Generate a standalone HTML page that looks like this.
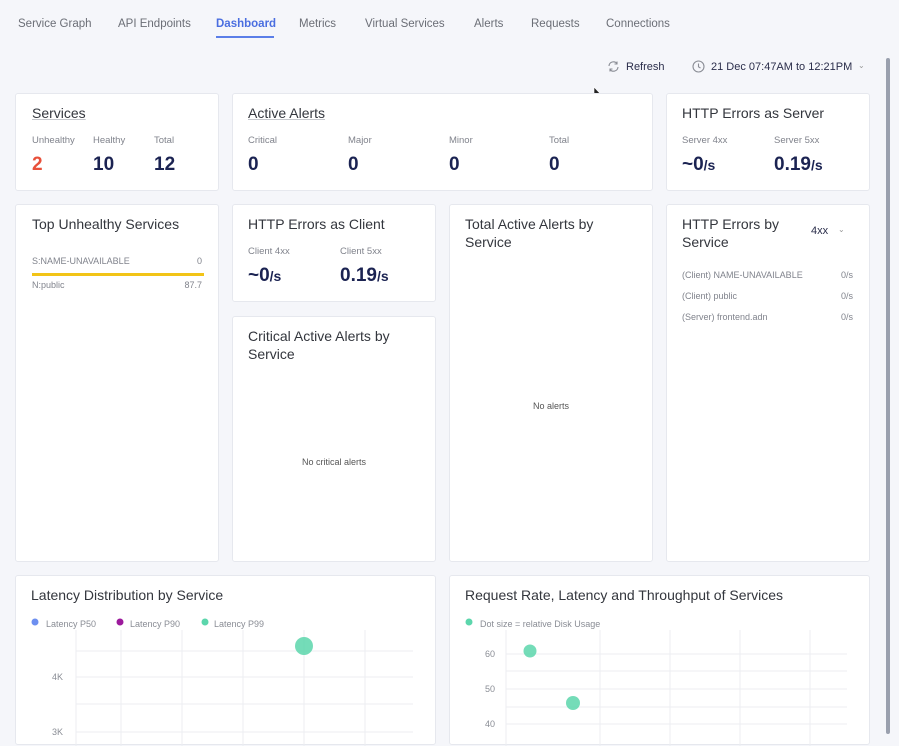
<!DOCTYPE html>
<html><head><meta charset="utf-8"><style>
*{box-sizing:border-box;margin:0;padding:0}
body{width:899px;height:734px;overflow:hidden;background:#f5f6fa;font-family:"Liberation Sans",sans-serif;position:relative;color:#2a2d34}
.tab{position:absolute;top:18px;font-size:11.5px;color:#6b6e76}
.card{position:absolute;background:#fff;border:1px solid #e6e8ee;border-radius:3px}
.t{position:absolute;font-size:14px;color:#33363d;line-height:18px}
.l{position:absolute;font-size:9.5px;color:#80838c}
.n{position:absolute;font-size:19px;font-weight:bold;color:#1b2352}
.n small{font-size:14px}
.s{position:absolute;font-size:9px;color:#80838c}
.ax{position:absolute;font-size:9px;color:#8a8d95}
</style></head><body>
<div class="tab" style="left:18px">Service Graph</div>
<div class="tab" style="left:118px">API Endpoints</div>
<div class="tab" style="left:216px;color:#4a6ee0;font-weight:bold">Dashboard</div>
<div style="position:absolute;left:216px;top:36px;width:58px;height:2px;background:#5b7ee8"></div>
<div class="tab" style="left:299px">Metrics</div>
<div class="tab" style="left:365px">Virtual Services</div>
<div class="tab" style="left:474px">Alerts</div>
<div class="tab" style="left:531px">Requests</div>
<div class="tab" style="left:606px">Connections</div>

<svg style="position:absolute;left:607px;top:60px" width="13" height="13" viewBox="0 0 13 13" fill="none" stroke="#8a8d95" stroke-width="1.1"><path d="M2 6a4.5 4.5 0 0 1 8-2.5M10 1.5v2.5H7.5M11 7a4.5 4.5 0 0 1-8 2.5M3 11.5V9h2.5"/></svg>
<div style="position:absolute;left:626px;top:61px;font-size:11px;color:#2a2d4a">Refresh</div>
<svg style="position:absolute;left:692px;top:60px" width="13" height="13" viewBox="0 0 13 13" fill="none" stroke="#8a8d95" stroke-width="1.1"><circle cx="6.5" cy="6.5" r="5.5"/><path d="M6.5 3.5v3.3l2 1.2"/></svg>
<div style="position:absolute;left:711px;top:61px;font-size:11px;color:#2a2d4a">21 Dec 07:47AM to 12:21PM</div>
<div style="position:absolute;left:858px;top:61px;font-size:8px;color:#999">&#8964;</div>
<svg style="position:absolute;left:593px;top:86px" width="8" height="13" viewBox="0 0 8 13"><path d="M1 1v10l2.5-2.5 2 3.5 1.3-.7-2-3.4H7.5z" fill="#222" stroke="#fff" stroke-width=".6"/></svg>
<div style="position:absolute;left:886px;top:58px;width:4px;height:676px;background:#9aa0ae;border-radius:2px"></div>

<div class="card" style="left:15px;top:93px;width:204px;height:98px">
<div class="t" style="left:16px;top:10px;text-decoration:underline;text-decoration-color:#c5c7cc">Services</div>
<div class="l" style="left:16px;top:41px">Unhealthy</div><div class="l" style="left:77px;top:41px">Healthy</div><div class="l" style="left:138px;top:41px">Total</div>
<div class="n" style="left:16px;top:60px;color:#e8503a">2</div><div class="n" style="left:77px;top:60px">10</div><div class="n" style="left:138px;top:60px">12</div>
</div>
<div class="card" style="left:232px;top:93px;width:421px;height:98px">
<div class="t" style="left:15px;top:10px;text-decoration:underline;text-decoration-color:#c5c7cc">Active Alerts</div>
<div class="l" style="left:15px;top:41px">Critical</div><div class="l" style="left:115px;top:41px">Major</div><div class="l" style="left:216px;top:41px">Minor</div><div class="l" style="left:316px;top:41px">Total</div>
<div class="n" style="left:15px;top:60px">0</div><div class="n" style="left:115px;top:60px">0</div><div class="n" style="left:216px;top:60px">0</div><div class="n" style="left:316px;top:60px">0</div>
</div>
<div class="card" style="left:666px;top:93px;width:204px;height:98px">
<div class="t" style="left:15px;top:10px">HTTP Errors as Server</div>
<div class="l" style="left:15px;top:41px">Server 4xx</div><div class="l" style="left:107px;top:41px">Server 5xx</div>
<div class="n" style="left:15px;top:60px">~0<small>/s</small></div><div class="n" style="left:107px;top:60px">0.19<small>/s</small></div>
</div>

<div class="card" style="left:15px;top:204px;width:204px;height:358px">
<div class="t" style="left:16px;top:10px">Top Unhealthy Services</div>
<div class="s" style="left:16px;top:51px">S:NAME-UNAVAILABLE</div><div class="s" style="right:16px;top:51px">0</div>
<div style="position:absolute;left:16px;top:68px;width:172px;height:3px;background:#f2c417"></div>
<div class="s" style="left:16px;top:75px">N:public</div><div class="s" style="right:16px;top:75px">87.7</div>
</div>
<div class="card" style="left:232px;top:204px;width:204px;height:98px">
<div class="t" style="left:15px;top:10px">HTTP Errors as Client</div>
<div class="l" style="left:15px;top:41px">Client 4xx</div><div class="l" style="left:107px;top:41px">Client 5xx</div>
<div class="n" style="left:15px;top:60px">~0<small>/s</small></div><div class="n" style="left:107px;top:60px">0.19<small>/s</small></div>
</div>
<div class="card" style="left:232px;top:316px;width:204px;height:246px">
<div class="t" style="left:15px;top:10px">Critical Active Alerts by<br>Service</div>
<div class="s" style="left:0;width:100%;text-align:center;top:140px;color:#555">No critical alerts</div>
</div>
<div class="card" style="left:449px;top:204px;width:204px;height:358px">
<div class="t" style="left:15px;top:10px">Total Active Alerts by<br>Service</div>
<div class="s" style="left:0;width:100%;text-align:center;top:196px;color:#555">No alerts</div>
</div>
<div class="card" style="left:666px;top:204px;width:204px;height:358px">
<div class="t" style="left:15px;top:10px">HTTP Errors by<br>Service</div>
<div style="position:absolute;left:144px;top:20px;font-size:11px;color:#2a2d4a">4xx</div>
<div style="position:absolute;left:171px;top:20px;font-size:8px;color:#999">&#8964;</div>
<div class="s" style="left:15px;top:65px">(Client) NAME-UNAVAILABLE</div><div class="s" style="right:16px;top:65px">0/s</div>
<div class="s" style="left:15px;top:86px">(Client) public</div><div class="s" style="right:16px;top:86px">0/s</div>
<div class="s" style="left:15px;top:107px">(Server) frontend.adn</div><div class="s" style="right:16px;top:107px">0/s</div>
</div>

<div class="card" style="left:15px;top:575px;width:421px;height:170px">
<div class="t" style="left:15px;top:10px">Latency Distribution by Service</div>
<svg style="position:absolute;left:0;top:0" width="421" height="170">
<circle cx="19" cy="46" r="3.5" fill="#6d8ff0"/><circle cx="104" cy="46" r="3.5" fill="#9c1a9c"/><circle cx="189" cy="46" r="3.5" fill="#5cd6ac"/>
<g stroke="#eceef2"><line x1="105" y1="54" x2="105" y2="170"/><line x1="166" y1="54" x2="166" y2="170"/><line x1="227" y1="54" x2="227" y2="170"/><line x1="288" y1="54" x2="288" y2="170"/><line x1="349" y1="54" x2="349" y2="170"/>
<line x1="60" y1="54" x2="60" y2="170"/>
<line x1="60" y1="75" x2="397" y2="75"/><line x1="60" y1="101" x2="397" y2="101"/><line x1="60" y1="128" x2="397" y2="128"/><line x1="60" y1="156" x2="397" y2="156"/></g>
<circle cx="288" cy="70" r="9" fill="#5cd6ac" opacity=".85"/>
</svg>
<div class="ax" style="left:30px;top:43px">Latency P50</div><div class="ax" style="left:114px;top:43px">Latency P90</div><div class="ax" style="left:198px;top:43px">Latency P99</div>
<div class="ax" style="left:36px;top:96px">4K</div><div class="ax" style="left:36px;top:151px">3K</div>
</div>
<div class="card" style="left:449px;top:575px;width:421px;height:170px">
<div class="t" style="left:15px;top:10px">Request Rate, Latency and Throughput of Services</div>
<svg style="position:absolute;left:0;top:0" width="421" height="170">
<circle cx="19" cy="46" r="3.5" fill="#5cd6ac"/>
<g stroke="#eceef2"><line x1="56" y1="54" x2="56" y2="170"/><line x1="150" y1="54" x2="150" y2="170"/><line x1="220" y1="54" x2="220" y2="170"/><line x1="290" y1="54" x2="290" y2="170"/><line x1="360" y1="54" x2="360" y2="170"/>
<line x1="56" y1="78" x2="397" y2="78"/><line x1="56" y1="95" x2="397" y2="95"/><line x1="56" y1="113" x2="397" y2="113"/><line x1="56" y1="131" x2="397" y2="131"/><line x1="56" y1="148" x2="397" y2="148"/></g>
<circle cx="80" cy="75" r="6.5" fill="#5cd6ac" opacity=".85"/><circle cx="123" cy="127" r="7" fill="#5cd6ac" opacity=".85"/>
</svg>
<div class="ax" style="left:30px;top:43px">Dot size = relative Disk Usage</div>
<div class="ax" style="left:35px;top:73px">60</div><div class="ax" style="left:35px;top:108px">50</div><div class="ax" style="left:35px;top:143px">40</div>
</div>
</body></html>
